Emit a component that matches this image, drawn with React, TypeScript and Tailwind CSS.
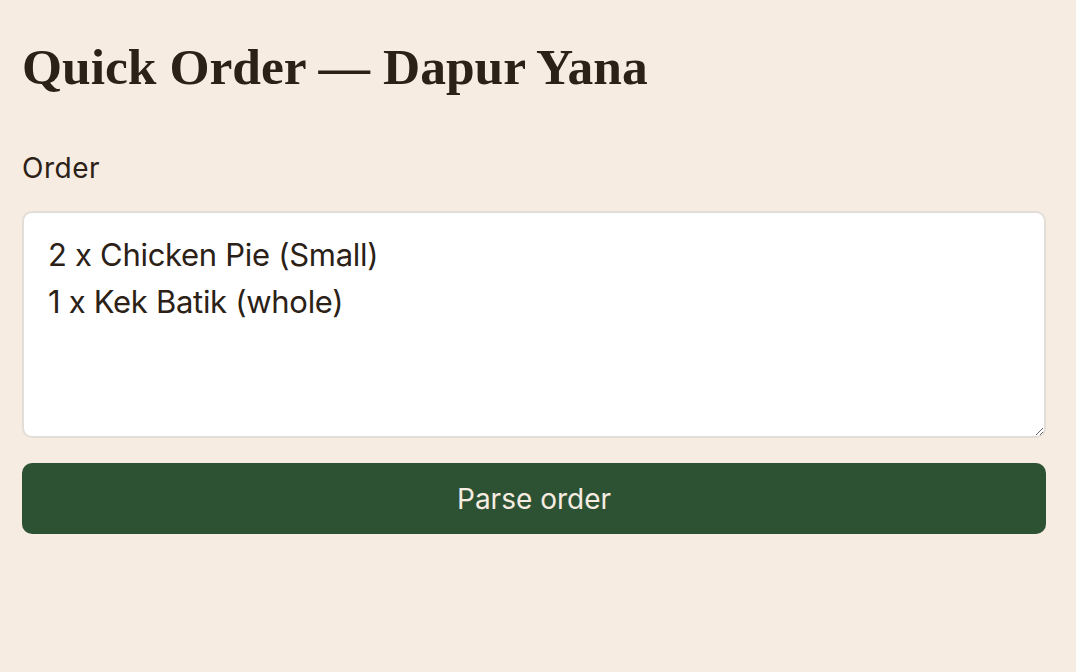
import React from "react";

export default function App() {
  return (
    <div className="min-h-[672px] w-full bg-[#f6ece1] pl-[22px] pr-[30px] pt-[36px] text-[#2b2116]">
      <h1
        className="text-[51.5px] font-bold leading-[62px]"
        style={{ fontFamily: '"Liberation Serif", "DejaVu Serif", serif' }}
      >
        Quick Order — Dapur Yana
      </h1>
      <div style={{ fontFamily: 'Inter, "Noto Sans", sans-serif' }}>
        <label className="mt-[50px] block text-[28px] leading-[40px] tracking-[0.5px]">Order</label>
        <textarea
          className="mt-[23px] block h-[227px] w-full resize-y rounded-[10px] border-2 border-[#e2ddd7] bg-white pl-[24px] pr-[24px] pt-[18px] text-[31px] leading-[47px] tracking-[-0.3px] text-[#2b2116] outline-none"
          defaultValue={"2 x Chicken Pie (Small)\n1 x Kek Batik (whole)"}
        />
        <button className="mt-[25px] flex h-[71px] w-full items-center justify-center rounded-[10px] bg-[#2d5233] text-[28px] text-[#f6ece1]">
          Parse order
        </button>
      </div>
    </div>
  );
}
